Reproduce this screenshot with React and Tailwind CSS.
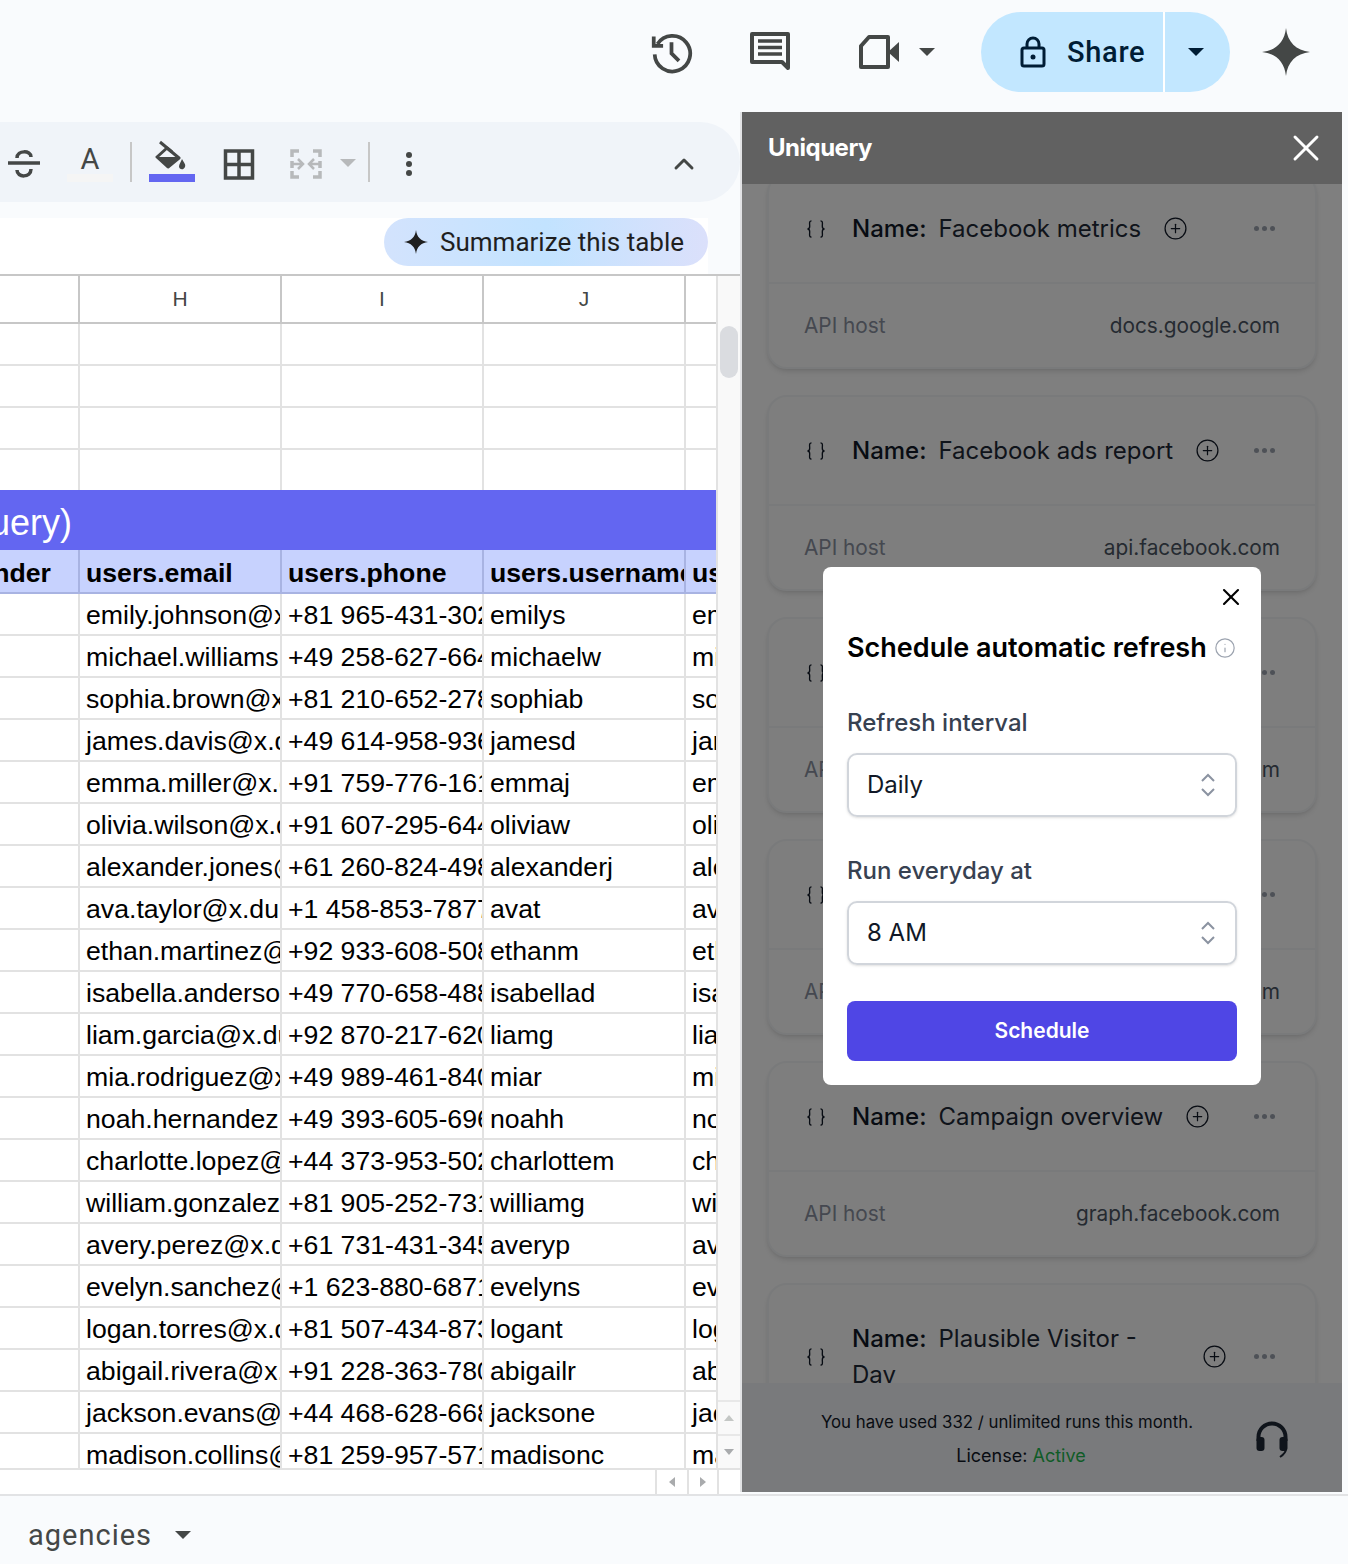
import React from 'react'
import { ChevronUp, Info, PlusCircle, X } from 'lucide-react'

const users = [
  ['emily.johnson@x.dummyjson.com', '+81 965-431-3024', 'emilys'],
  ['michael.williams@x.dummyjson.com', '+49 258-627-6644', 'michaelw'],
  ['sophia.brown@x.dummyjson.com', '+81 210-652-2785', 'sophiab'],
  ['james.davis@x.dummyjson.com', '+49 614-958-9364', 'jamesd'],
  ['emma.miller@x.dummyjson.com', '+91 759-776-1614', 'emmaj'],
  ['olivia.wilson@x.dummyjson.com', '+91 607-295-6448', 'oliviaw'],
  ['alexander.jones@x.dummyjson.com', '+61 260-824-4986', 'alexanderj'],
  ['ava.taylor@x.dummyjson.com', '+1 458-853-7877', 'avat'],
  ['ethan.martinez@x.dummyjson.com', '+92 933-608-5081', 'ethanm'],
  ['isabella.anderson@x.dummyjson.com', '+49 770-658-4885', 'isabellad'],
  ['liam.garcia@x.dummyjson.com', '+92 870-217-6201', 'liamg'],
  ['mia.rodriguez@x.dummyjson.com', '+49 989-461-8403', 'miar'],
  ['noah.hernandez@x.dummyjson.com', '+49 393-605-6968', 'noahh'],
  ['charlotte.lopez@x.dummyjson.com', '+44 373-953-5028', 'charlottem'],
  ['william.gonzalez@x.dummyjson.com', '+81 905-252-7319', 'williamg'],
  ['avery.perez@x.dummyjson.com', '+61 731-431-3457', 'averyp'],
  ['evelyn.sanchez@x.dummyjson.com', '+1 623-880-6871', 'evelyns'],
  ['logan.torres@x.dummyjson.com', '+81 507-434-8733', 'logant'],
  ['abigail.rivera@x.dummyjson.com', '+91 228-363-7806', 'abigailr'],
  ['jackson.evans@x.dummyjson.com', '+44 468-628-6686', 'jacksone'],
  ['madison.collins@x.dummyjson.com', '+81 259-957-5711', 'madisonc'],
]

const sources = [
  { name: 'Facebook metrics', host: 'docs.google.com' },
  { name: 'Facebook ads report', host: 'api.facebook.com' },
  { name: 'Facebook ads report', host: 'api.facebook.com' },
  { name: 'Facebook ads report', host: 'api.facebook.com' },
  { name: 'Campaign overview', host: 'graph.facebook.com' },
  { name: 'Plausible Visitor - Dav', host: 'plausible.io', wrap: true },
]

const gridCols = 'grid grid-cols-[80px_202px_202px_202px_30px]'

const Spark = ({ size, color = '#444746' }) => (
  <svg width={size} height={size} viewBox="0 0 48 48">
    <path d="M24 0C25.500 14 34 22.500 48 24C34 25.500 25.500 34 24 48C22.500 34 14 25.500 0 24C14 22.500 22.500 14 24 0Z" fill={color} />
  </svg>
)

const Caret = ({ color = '#444746', w = 16 }) => (
  <svg width={w} height={w / 2} viewBox="0 0 16 8">
    <path d="M0 0H16L8 8Z" fill={color} />
  </svg>
)

const TopBar = () => (
  <div className="h-[112px] flex items-center pb-[8px]">
    <svg className="ml-[650px]" width="43" height="43" viewBox="0 0 46 46" fill="none" stroke="#444746" strokeWidth="4">
      <path d="M8 14A19 19 0 1 1 5 25" />
      <path d="M4 6V16H14" strokeWidth="4" />
      <path d="M23 12V24L31 32" />
    </svg>
    <svg className="ml-[56px]" width="42" height="40" viewBox="0 0 42 40" fill="none">
      <path d="M3 2H39V36L33 30H3Z" stroke="#444746" strokeWidth="4" strokeLinejoin="round" />
      <path d="M9 9H33M9 15.500H33M9 22H33" stroke="#444746" strokeWidth="3.500" />
    </svg>
    <svg className="ml-[67px]" width="42" height="34" viewBox="0 0 42 34" fill="none">
      <path d="M11 2H30V32H3V11Z" stroke="#444746" strokeWidth="4" strokeLinejoin="round" />
      <path d="M30 17L41 7V27Z" fill="#444746" />
    </svg>
    <div className="ml-[19px]">
      <Caret />
    </div>
    <div className="ml-[46px] h-[80px] w-[249px] rounded-full bg-[#c2e7ff] flex items-center">
      <svg className="ml-[38px]" width="28" height="32" viewBox="0 0 28 32" fill="none" stroke="#001d35" strokeWidth="3">
        <rect x="3" y="12" width="22" height="18" rx="2" />
        <path d="M8 12V8A6 6 0 0 1 20 8V12" />
        <circle cx="14" cy="21" r="2.500" fill="#001d35" stroke="none" />
      </svg>
      <span className="ml-[20px] pt-[1px] text-[29px] font-medium text-[#001d35] font-['Roboto',sans-serif] tracking-[0.7px]">Share</span>
      <div className="ml-[18px] w-[2px] h-[80px] bg-white" />
      <div className="ml-[23px]">
        <Caret color="#001d35" />
      </div>
    </div>
    <div className="ml-[32px]">
      <Spark size={48} />
    </div>
  </div>
)

const ToolSep = () => <div className="w-[2px] h-[40px] bg-[#c7c7c7]" />

const Toolbar = () => (
  <div className="mt-[10px] h-[80px] w-[740px] rounded-r-[40px] bg-[#f0f4f9] flex items-center">
    <svg className="ml-[4px] mt-[4px]" width="40" height="32" viewBox="0 0 40 32" fill="none" stroke="#444746" strokeWidth="3.500">
      <path d="M4 15H36" />
      <path d="M13 10C13 2 27 2 27 9" />
      <path d="M27 21C27 30 13 30 13 22" />
    </svg>
    <div className="ml-[23px] mt-[2px] w-[46px] flex flex-col items-center">
      <span className="text-[29px] leading-[30px] text-[#444746] font-['Roboto',sans-serif]">A</span>
      <div className="w-[46px] h-[8px] bg-[#f5f5f5]" />
    </div>
    <div className="ml-[17px]">
      <ToolSep />
    </div>
    <div className="ml-[17px] w-[46px] flex flex-col mb-[2px]">
      <svg className="ml-[6px]" width="36" height="32" viewBox="0 0 36 32">
        <path d="M5 2L17 12" stroke="#444746" strokeWidth="3" />
        <path d="M2 17L12 8L24 18L13 27Z" fill="none" stroke="#444746" strokeWidth="3" strokeLinejoin="round" />
        <path d="M2 17H24L13 27Z" fill="#444746" />
        <path d="M27 19C29 23 31 24 30 27C28 31 24 29 24 26.500C24 24 26 22 27 19Z" fill="#444746" />
      </svg>
      <div className="mt-[2px] w-[46px] h-[8px] bg-[#6366f1]" />
    </div>
    <svg className="ml-[24px] mt-[4px]" width="40" height="32" viewBox="0 0 40 32" fill="none" stroke="#444746" strokeWidth="3.500">
      <path d="M6.500 3H33.500V30H6.500ZM20 3V30M6.500 16.500H33.500" />
    </svg>
    <svg className="ml-[27px] mt-[4px]" width="40" height="32" viewBox="0 0 40 32" fill="none" stroke="#b7b9bb" strokeWidth="3.500">
      <path d="M13 3H6V9M6 13V20M6 23V29H13M27 3H34V9M34 13V20M34 23V29H27" />
      <path d="M6 16H16M12 11L17 16L12 21M34 16H24M28 11L23 16L28 21" strokeWidth="2.500" />
    </svg>
    <div className="ml-[12px] mt-[2px] w-[20px] flex justify-center">
      <Caret color="#b7b9bb" />
    </div>
    <div className="ml-[10px]">
      <ToolSep />
    </div>
    <div className="ml-[36px] mt-[4px] flex flex-col gap-[3px]">
      <div className="w-[6px] h-[6px] rounded-full bg-[#444746]" />
      <div className="w-[6px] h-[6px] rounded-full bg-[#444746]" />
      <div className="w-[6px] h-[6px] rounded-full bg-[#444746]" />
    </div>
    <ChevronUp className="ml-auto mr-[40px] mt-[4px]" size={32} strokeWidth={2.200} color="#444746" />
  </div>
)

const Cell = ({ children, last }) => (
  <div className={`h-[42px] overflow-hidden whitespace-nowrap pl-[6px] pt-[3px] leading-[36px] text-[26.670px] text-black border-b-2 border-[#e2e2e2] ${last ? '' : 'border-r-2'}`}>
    {children}
  </div>
)

const Sheet = () => (
  <div className="flex h-[1192px]">
    <div className="w-[716px] overflow-hidden font-['Liberation_Sans',Arial,sans-serif] bg-white">
      <div className={`${gridCols} h-[48px] border-b-2 border-[#c7c7c7] text-[21px] text-[#444746] text-center leading-[46px]`}>
        <div className="border-r-2 border-[#c7c7c7]" />
        <div className="border-r-2 border-[#c7c7c7]">H</div>
        <div className="border-r-2 border-[#c7c7c7]">I</div>
        <div className="border-r-2 border-[#c7c7c7]">J</div>
        <div />
      </div>
      {[42, 42, 42, 40].map((h, i) => (
        <div key={i} className={`${gridCols} ${h === 42 ? 'h-[42px] border-b-2' : 'h-[40px]'} border-[#e2e2e2]`}>
          <div className="border-r-2 border-[#e2e2e2]" />
          <div className="border-r-2 border-[#e2e2e2]" />
          <div className="border-r-2 border-[#e2e2e2]" />
          <div className="border-r-2 border-[#e2e2e2]" />
          <div />
        </div>
      ))}
      <div className="h-[60px] bg-[#6366f1] text-white text-[36px] leading-[66px]">
        <div className="w-[72px] flex justify-end overflow-hidden whitespace-nowrap">Uniquery)</div>
      </div>
      <div className={`${gridCols} h-[44px] bg-[#c7d2fe] border-b-2 border-[#a8b3e2] font-bold text-[26.670px] text-black leading-[46px]`}>
        <div className="border-r-2 border-[#a8b3e2] overflow-hidden whitespace-nowrap flex justify-end pr-[27px]">users.gender</div>
        <div className="border-r-2 border-[#a8b3e2] overflow-hidden whitespace-nowrap pl-[6px]">users.email</div>
        <div className="border-r-2 border-[#a8b3e2] overflow-hidden whitespace-nowrap pl-[6px]">users.phone</div>
        <div className="border-r-2 border-[#a8b3e2] overflow-hidden whitespace-nowrap pl-[6px]">users.username</div>
        <div className="overflow-hidden whitespace-nowrap pl-[6px]">users.password</div>
      </div>
      {users.map(([email, phone, username]) => (
        <div key={username} className={gridCols}>
          <Cell />
          <Cell>{email}</Cell>
          <Cell>{phone}</Cell>
          <Cell>{username}</Cell>
          <Cell last>{username}</Cell>
        </div>
      ))}
    </div>
    <div className="w-[24px] border-l-2 border-[#e2e2e2] bg-[#f9f9f9] flex flex-col items-center pt-[50px]">
      <div className="w-[18px] h-[52px] rounded-full bg-[#dadce0]" />
      <div className="mt-auto w-full flex flex-col items-center">
        <div className="h-[34px] w-full flex items-center justify-center border-t-2 border-[#e8e8e8]">
          <svg width="10" height="6" viewBox="0 0 10 6"><path d="M0 6H10L5 0Z" fill="#c4c7c5" /></svg>
        </div>
        <div className="h-[34px] w-full flex items-center justify-center border-t-2 border-[#e8e8e8]">
          <svg width="10" height="6" viewBox="0 0 10 6"><path d="M0 0H10L5 6Z" fill="#a9abad" /></svg>
        </div>
      </div>
    </div>
  </div>
)

const HorizontalBar = () => (
  <div className="h-[26px] bg-white flex justify-end border-t-2 border-[#e2e2e2]">
    <div className="w-[32px] border-l-2 border-[#e2e2e2] flex items-center justify-center">
      <svg width="6" height="10" viewBox="0 0 6 10"><path d="M6 0V10L0 5Z" fill="#a9abad" /></svg>
    </div>
    <div className="w-[30px] border-l-2 border-[#e2e2e2] flex items-center justify-center">
      <svg width="6" height="10" viewBox="0 0 6 10"><path d="M0 0V10L6 5Z" fill="#a9abad" /></svg>
    </div>
    <div className="w-[23px] border-l-2 border-[#e2e2e2]" />
  </div>
)

const SourceCard = ({ source }) => (
  <div className="w-[550px] h-[196px] shrink-0 rounded-[20px] bg-[#fcfdfc] border-2 border-[#f3f4f6] shadow-md overflow-hidden">
    <div className={`${source.wrap ? 'h-[145px]' : 'h-[109px]'} flex items-center border-b-2 border-[#f3f4f6] pl-[36px] pr-[40px]`}>
      <svg width="22" height="18" viewBox="0 0 22 20" fill="none" stroke="#111827" strokeWidth="1.500">
        <path d="M6 1C3 1 4 4 4 7C4 9 3 10 1.500 10C3 10 4 11 4 13C4 16 3 19 6 19" />
        <path d="M16 1C19 1 18 4 18 7C18 9 19 10 20.500 10C19 10 18 11 18 13C18 16 19 19 16 19" />
      </svg>
      <div className={`ml-[25px] text-[24px] leading-[36px] text-[#1f2937] font-['Inter',sans-serif] ${source.wrap ? 'w-[328px]' : ''}`}>
        <span className="font-medium text-[#111827]">Name:</span>
        <span className="ml-[12px]">{source.name}</span>
      </div>
      <PlusCircle className="ml-[22px]" size={25} strokeWidth={1.200} color="#111827" />
      <div className="ml-auto flex gap-[3px]">
        <div className="w-[5px] h-[5px] rounded-full bg-[#9ca3af]" />
        <div className="w-[5px] h-[5px] rounded-full bg-[#9ca3af]" />
        <div className="w-[5px] h-[5px] rounded-full bg-[#9ca3af]" />
      </div>
    </div>
    <div className="flex justify-between items-center h-[84px] pl-[35px] pr-[35px] text-[20.800px] font-['Inter',sans-serif]">
      <span className="text-[#8b91a0]">API host</span>
      <span className="text-[#4b5563]">{source.host}</span>
    </div>
  </div>
)

const SelectBox = ({ value }) => (
  <div className="mt-[14px] h-[64px] rounded-[10px] border-2 border-[#d1d5db] shadow-sm flex items-center justify-between pl-[18px] pr-[19px] text-[24px] text-[#111827]">
    <span>{value}</span>
    <svg width="16" height="26" viewBox="0 0 16 26" fill="none" stroke="#8b93a1" strokeWidth="2">
      <path d="M2 9L8 3L14 9M2 17L8 23L14 17" />
    </svg>
  </div>
)

const ScheduleModal = () => (
  <div className="absolute left-[81px] top-[455px] w-[438px] rounded-[8px] bg-white px-[24px] pt-[63px] pb-[24px] font-['Inter',sans-serif]">
    <X className="absolute right-[16px] top-[16px]" size={28} strokeWidth={1.800} color="#000" />
    <div className="flex items-center">
      <span className="text-[27px] leading-[36px] font-semibold text-black whitespace-nowrap">Schedule automatic refresh</span>
      <Info className="ml-[7px] shrink-0" size={22} strokeWidth={1.300} color="#9ca3af" />
    </div>
    <div className="mt-[41px] text-[24px] leading-[32px] font-medium text-[#374151]">Refresh interval</div>
    <SelectBox value="Daily" />
    <div className="mt-[38px] text-[24px] leading-[32px] font-medium text-[#374151]">Run everyday at</div>
    <SelectBox value="8 AM" />
    <div className="mt-[36px] h-[60px] rounded-[8px] bg-[#4f46e5] flex items-center justify-center text-[21px] font-semibold text-white">
      Schedule
    </div>
  </div>
)

const Panel = () => (
  <div className="relative w-[602px] h-[1380px] border-l-2 border-[#e2e3e5] overflow-hidden">
    <div className="h-[72px] bg-[#616161] flex items-center justify-between pl-[26px] pr-[14px]">
      <span className="text-[24px] font-bold text-white font-['Inter',sans-serif] tracking-[-0.5px]">Uniquery</span>
      <X size={44} strokeWidth={1.600} color="#fff" />
    </div>
    <div className="relative h-[1308px] bg-white flex flex-col">
      <div className="flex-1 overflow-hidden">
        <div className="flex flex-col items-center gap-[26px] -mt-[11px]">
          {sources.map((s, i) => (
            <SourceCard key={i} source={s} />
          ))}
        </div>
      </div>
      <div className="relative h-[109px] bg-[#f3f4f8] flex items-center justify-center font-['Inter',sans-serif]">
        <div className="w-[530px] pt-[2px] text-center text-[16.800px] leading-[33px] text-[#111827] mr-[70px]">
          <div>You have used 332 / unlimited runs this month.</div>
          <div className="pl-[28px] text-[18px]">License: <span className="text-[#1fb84f]">Active</span></div>
        </div>
        <svg className="absolute left-[514px] top-[38px]" width="32" height="38" viewBox="0 0 32 38" fill="none">
          <path d="M2.500 20V16A13.500 13.500 0 0 1 29.500 16V20" stroke="#1f2937" strokeWidth="4" />
          <rect x="0.500" y="16" width="8" height="14" rx="3" fill="#1f2937" />
          <rect x="23.500" y="16" width="8" height="14" rx="3" fill="#1f2937" />
          <path d="M30 28C30 32 27 34 24 36" stroke="#1f2937" strokeWidth="2" />
        </svg>
      </div>
      <div className="absolute inset-0 bg-black/50" />
    </div>
    <ScheduleModal />
  </div>
)

export default function App() {
  return (
    <div className="w-[1348px] h-[1564px] bg-[#f9fbfd] flex flex-col overflow-hidden">
      <TopBar />
      <div className="flex h-[1382px]">
        <div className="w-[740px] shrink-0">
          <Toolbar />
          <div className="mt-[16px] w-[708px] h-[56px] bg-white flex justify-end items-start">
            <div className="h-[48px] rounded-full bg-gradient-to-r from-[#d3e3fd] via-[#c2e3ff] to-[#dbe0fb] flex items-center pl-[20px] pr-[24px]">
              <Spark size={24} color="#1f1f1f" />
              <span className="ml-[12px] text-[26px] text-[#1f1f1f] font-['Roboto',sans-serif] whitespace-nowrap">Summarize this table</span>
            </div>
          </div>
          <div className="border-t-2 border-[#c7c7c7]">
            <Sheet />
            <HorizontalBar />
          </div>
        </div>
        <Panel />
      </div>
      <div className="border-t-2 border-[#e2e3e5] flex items-center h-[68px] pl-[28px] pt-[14px]">
        <span className="text-[29px] text-[#444746] font-['Roboto',sans-serif] tracking-[1px]">agencies</span>
        <div className="ml-[23px] -mt-[2px]">
          <Caret />
        </div>
      </div>
    </div>
  )
}
